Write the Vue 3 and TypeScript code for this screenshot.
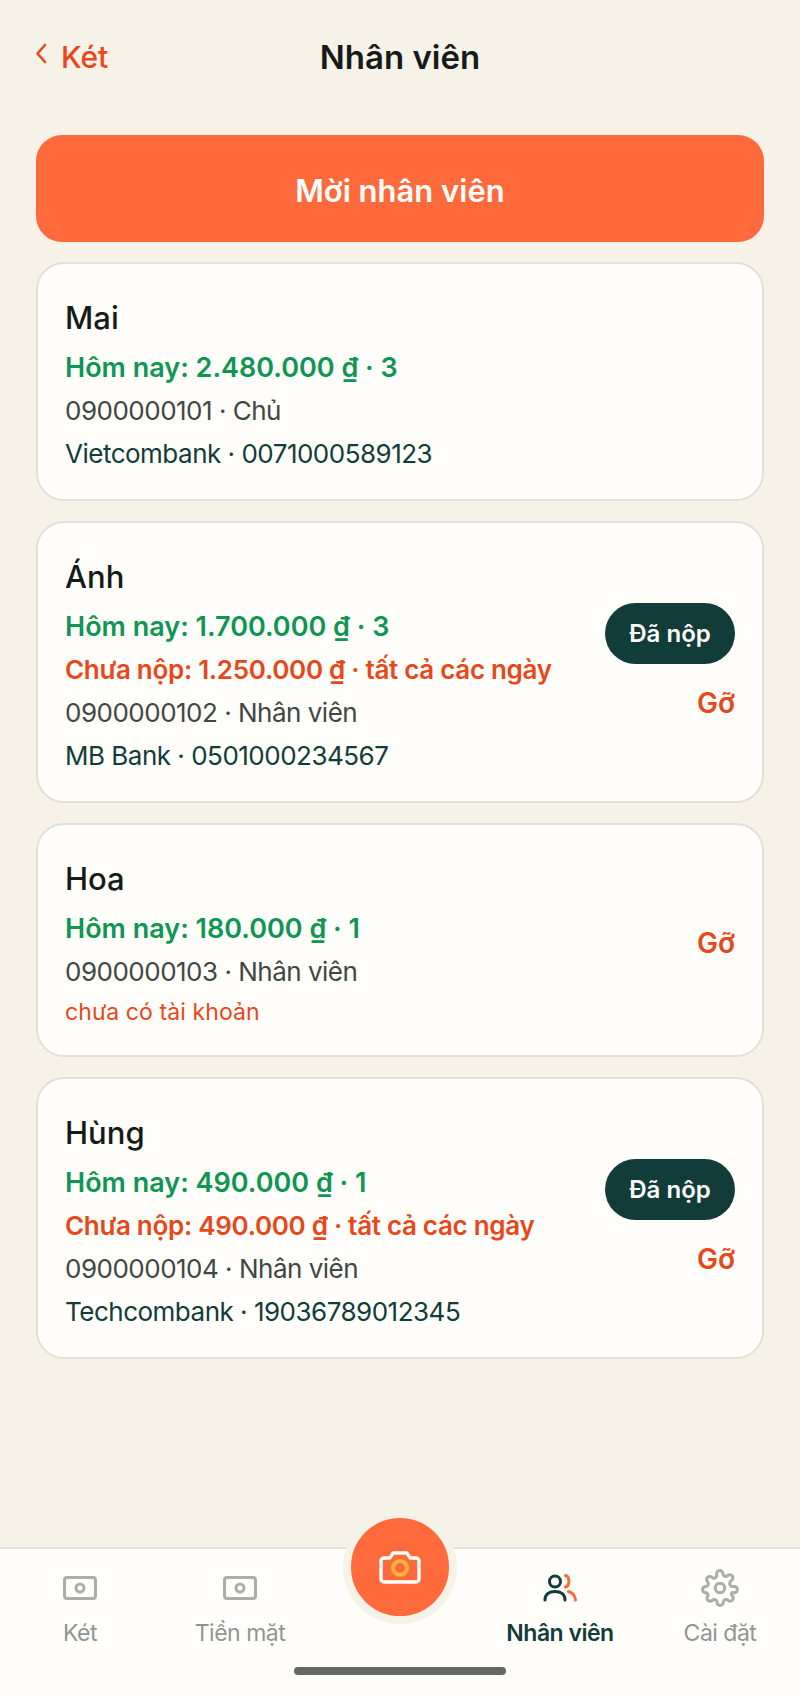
<template>
    <div class="page">
        <header class="top-bar">
            <a class="back">
                <svg class="back-icon" viewBox="0 0 12 22" width="12" height="22" fill="none">
                    <path d="M10 2 L2.5 10.5 L10 19" stroke="currentColor" stroke-width="2.6" stroke-linecap="round" stroke-linejoin="round" />
                </svg>
                <span>Két</span>
            </a>
            <h1 class="title">Nhân viên</h1>
        </header>

        <main class="content">
            <button class="invite-btn">Mời nhân viên</button>

            <section v-for="m in members" :key="m.phone" class="card">
                <div class="card-info">
                    <div class="name">{{ m.name }}</div>
                    <div class="today">Hôm nay: {{ m.today }} ₫ · {{ m.count }}</div>
                    <div v-if="m.unpaid" class="unpaid">Chưa nộp: {{ m.unpaid }} ₫ · tất cả các ngày</div>
                    <div class="phone">{{ m.phone }} · {{ m.role }}</div>
                    <div v-if="m.bank" class="bank">{{ m.bank }}</div>
                    <div v-else class="no-bank">chưa có tài khoản</div>
                </div>
                <div v-if="m.role !== 'Chủ'" class="card-actions">
                    <button v-if="m.unpaid" class="paid-btn">Đã nộp</button>
                    <a class="remove">Gỡ</a>
                </div>
            </section>
        </main>

        <nav class="tab-bar">
            <div v-for="(t, i) in tabs" :key="i" class="tab" :class="{ active: t.active }">
                <template v-if="t.icon">
                    <span class="tab-icon">
                        <svg v-if="t.icon === 'cash'" viewBox="0 0 34 24" width="34" height="24" fill="none" stroke="#a9aeaa" stroke-width="3">
                            <rect x="1.5" y="1.5" width="31" height="21" rx="2.5" />
                            <circle cx="17" cy="12" r="4" />
                        </svg>
                        <svg v-else-if="t.icon === 'people'" viewBox="0 0 34 30" width="34" height="30" fill="none" stroke-width="3" stroke-linecap="round">
                            <circle cx="12" cy="8.5" r="5.5" stroke="#123c3a" />
                            <path d="M2 27 C2 21 6.5 18.5 12 18.5 C17.5 18.5 22 21 22 27" stroke="#123c3a" />
                            <path d="M22.5 2.5 C27 3.5 27 13 22.5 14" stroke="#ff6a3d" />
                            <path d="M25.5 18.5 C29.5 19.5 32 23 32.5 27" stroke="#ff6a3d" />
                        </svg>
                        <svg v-else viewBox="0 0 24 24" width="38" height="38" fill="none" stroke="#a9aeaa" stroke-width="1.9" stroke-linejoin="round">
                            <circle cx="12" cy="12" r="3" />
                            <path d="M19.4 15a1.65 1.65 0 0 0 .33 1.82l.06.06a2 2 0 1 1-2.83 2.83l-.06-.06a1.65 1.65 0 0 0-2.82 1.17V21a2 2 0 1 1-4 0v-.09a1.65 1.65 0 0 0-2.82-1.13l-.06.06a2 2 0 1 1-2.83-2.83l.06-.06A1.65 1.65 0 0 0 3.09 15H3a2 2 0 1 1 0-4h.09a1.65 1.65 0 0 0 1.13-2.82l-.06-.06a2 2 0 1 1 2.83-2.83l.06.06A1.65 1.65 0 0 0 9.87 4.2V3a2 2 0 1 1 4 0v.09a1.65 1.65 0 0 0 2.82 1.13l.06-.06a2 2 0 1 1 2.83 2.83l-.06.06A1.65 1.65 0 0 0 20.91 11H21a2 2 0 1 1 0 4h-.09a1.65 1.65 0 0 0-1.51 0z" />
                        </svg>
                    </span>
                    <span class="tab-label">{{ t.label }}</span>
                </template>
            </div>

            <button class="camera-btn">
                <svg viewBox="0 0 44 34" width="44" height="34" fill="none">
                    <path d="M3 11 a3 3 0 0 1 3-3 h6 l3-5 h14 l3 5 h6 a3 3 0 0 1 3 3 v18 a3 3 0 0 1-3 3 H6 a3 3 0 0 1-3-3z" stroke="#fffefa" stroke-width="3.4" stroke-linejoin="round" />
                    <circle cx="22" cy="18" r="7" stroke="#f6b23c" stroke-width="4" />
                </svg>
            </button>
            <div class="home-indicator"></div>
        </nav>
    </div>
</template>

<script setup lang="ts">
interface Member {
    name: string
    today: string
    count: number
    unpaid?: string
    phone: string
    role: string
    bank?: string
}

const members: Member[] = [
    { name: 'Mai', today: '2.480.000', count: 3, phone: '0900000101', role: 'Chủ', bank: 'Vietcombank · 0071000589123' },
    { name: 'Ánh', today: '1.700.000', count: 3, unpaid: '1.250.000', phone: '0900000102', role: 'Nhân viên', bank: 'MB Bank · 0501000234567' },
    { name: 'Hoa', today: '180.000', count: 1, phone: '0900000103', role: 'Nhân viên' },
    { name: 'Hùng', today: '490.000', count: 1, unpaid: '490.000', phone: '0900000104', role: 'Nhân viên', bank: 'Techcombank · 19036789012345' },
]

const tabs = [
    { label: 'Két', icon: 'cash' },
    { label: 'Tiền mặt', icon: 'cash' },
    { label: '', icon: '' },
    { label: 'Nhân viên', icon: 'people', active: true },
    { label: 'Cài đặt', icon: 'gear' },
]
</script>

<style>
body {
    background: #f6f2e8;
}
</style>

<style scoped>
.page {
    display: flex;
    flex-direction: column;
    height: 1695px;
    background: #f6f2e8;
    font-family: Inter, "Noto Sans", sans-serif;
    color: #161a19;
}

.top-bar {
    position: relative;
    display: flex;
    justify-content: center;
    align-items: center;
    height: 40px;
    margin-top: 37px;
}

.back {
    position: absolute;
    left: 35px;
    top: 2px;
    display: flex;
    align-items: center;
    gap: 14px;
    color: #e8471a;
    font-size: 30px;
    font-weight: 500;
}

.back-icon {
    margin-top: -6px;
}

.title {
    margin: 0;
    font-size: 33px;
    font-weight: 600;
    line-height: 40px;
}

.content {
    flex: 1;
    display: flex;
    flex-direction: column;
    gap: 20px;
    padding: 58px 36px 0;
}

.invite-btn {
    height: 107px;
    border: none;
    border-radius: 26px;
    background: #ff6a3d;
    color: #fffefa;
    font-family: inherit;
    font-size: 31px;
    font-weight: 600;
    padding-top: 4px;
}

.card {
    display: flex;
    justify-content: space-between;
    align-items: center;
    padding: 34px 27px 28px 27px;
    background: #fffefa;
    border: 2px solid #e2dfd8;
    border-radius: 28px;
}

.card-info {
    display: flex;
    flex-direction: column;
    gap: 8px;
}

.name {
    font-size: 31px;
    font-weight: 500;
    line-height: 40px;
    margin-bottom: 4px;
}

.today,
.unpaid,
.phone,
.bank {
    line-height: 35px;
}

.today {
    color: #0f9554;
    font-size: 27px;
    font-weight: 600;
}

.unpaid {
    color: #e8471a;
    font-size: 26px;
    font-weight: 600;
    letter-spacing: -0.3px;
}

.phone {
    color: #3f4745;
    font-size: 26px;
    letter-spacing: -0.5px;
}

.bank {
    color: #123c3a;
    font-size: 26px;
    letter-spacing: -0.5px;
}

.no-bank {
    color: #e8471a;
    font-size: 23px;
    line-height: 30px;
    letter-spacing: 0.1px;
}

.card-actions {
    display: flex;
    flex-direction: column;
    align-items: flex-end;
    gap: 22px;
}

.paid-btn {
    width: 130px;
    height: 61px;
    margin-top: -6px;
    border: none;
    border-radius: 31px;
    background: #123c3a;
    color: #fffefa;
    font-family: inherit;
    font-size: 24px;
    font-weight: 600;
}

.remove {
    color: #e8471a;
    font-size: 28px;
    font-weight: 600;
    line-height: 35px;
}

.tab-bar {
    position: relative;
    display: grid;
    grid-template-columns: repeat(5, 1fr);
    height: 148px;
    box-sizing: border-box;
    padding-top: 19px;
    background: #fffefa;
    border-top: 2px solid #e2dfd8;
}

.tab {
    display: flex;
    flex-direction: column;
    align-items: center;
    gap: 10px;
    color: #8f9692;
}

.tab-icon {
    display: flex;
    align-items: center;
    justify-content: center;
    height: 40px;
}

.tab-label {
    font-size: 23px;
    line-height: 30px;
    letter-spacing: -0.5px;
}

.tab.active {
    color: #123c3a;
}

.tab.active .tab-label {
    font-weight: 600;
}

.camera-btn {
    position: absolute;
    left: 343px;
    top: -39px;
    display: flex;
    align-items: center;
    justify-content: center;
    width: 114px;
    height: 114px;
    padding: 0;
    border: 8px solid #f6f2e8;
    border-radius: 50%;
    background: #ff6a3d;
}

.home-indicator {
    position: absolute;
    left: 294px;
    bottom: 20px;
    width: 212px;
    height: 8px;
    border-radius: 4px;
    background: #666662;
}
</style>
